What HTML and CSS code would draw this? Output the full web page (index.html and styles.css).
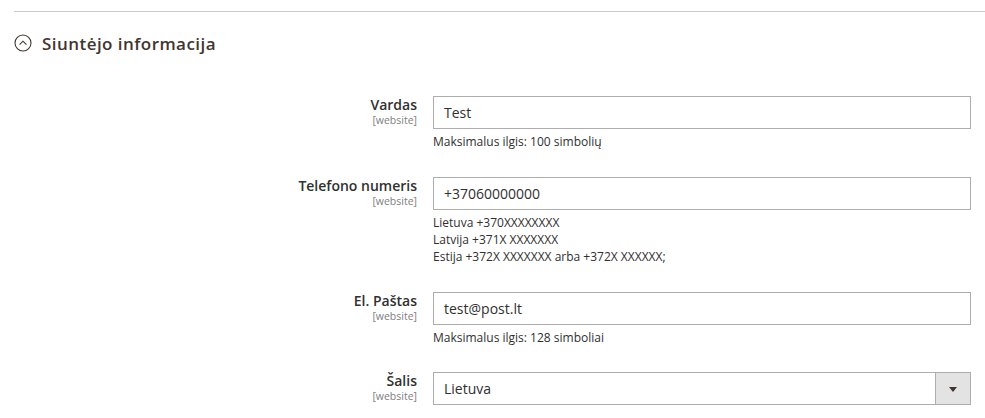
FILE: index.html
```html
<!DOCTYPE html>
<html lang="lt">
<head>
<meta charset="utf-8">
<link rel="stylesheet" href="styles.css">
</head>
<body>
<div class="section">
  <div class="section-head">
    <svg class="toggle" width="18" height="18" viewBox="0 0 18 18" aria-hidden="true">
      <circle cx="9" cy="9" r="8" fill="none" stroke="#41362f" stroke-width="1.1"/>
      <path d="M5.6 10.6 L9 7.2 L12.4 10.6" fill="none" stroke="#41362f" stroke-width="1.1"/>
    </svg>
    <span class="section-title">Siuntėjo informacija</span>
  </div>
  <div class="fields">
    <div class="row">
      <div class="label"><span class="name">Vardas</span><span class="scope">[website]</span></div>
      <div class="control">
        <div class="input">Test</div>
        <div class="note">Maksimalus ilgis: 100 simbolių</div>
      </div>
    </div>
    <div class="row">
      <div class="label"><span class="name">Telefono numeris</span><span class="scope">[website]</span></div>
      <div class="control">
        <div class="input">+37060000000</div>
        <div class="note">Lietuva +370XXXXXXXX<br>Latvija +371X XXXXXXX<br>Estija +372X XXXXXXX arba +372X XXXXXX;</div>
      </div>
    </div>
    <div class="row">
      <div class="label"><span class="name">El. Paštas</span><span class="scope">[website]</span></div>
      <div class="control">
        <div class="input">test@post.lt</div>
        <div class="note">Maksimalus ilgis: 128 simboliai</div>
      </div>
    </div>
    <div class="row row-last">
      <div class="label"><span class="name">Šalis</span><span class="scope">[website]</span></div>
      <div class="control">
        <div class="select"><span class="select-value">Lietuva</span><span class="select-btn"><span class="arrow"></span></span></div>
      </div>
    </div>
  </div>
</div>
</body>
</html>
```

FILE: styles.css
```css
html, body {
  margin: 0;
  padding: 0;
  background: #ffffff;
}
body {
  font-family: "Open Sans", "Noto Sans", sans-serif;
  color: #303030;
  overflow: hidden;
}
.section {
  margin-left: 14px;
  padding-top: 11px;
}
.section-head {
  border-top: 1px solid #cccccc;
  display: flex;
  align-items: center;
  padding-top: 20px;
  height: 22px;
}
.toggle {
  flex: none;
  margin-left: 0;
  margin-right: 10px;
}
.section-title {
  font-size: 17px;
  font-weight: 600;
  color: #41362f;
  letter-spacing: 0.45px;
}
.fields {
  padding-top: 42px;
}
.row {
  display: flex;
  align-items: flex-start;
  gap: 16px;
  margin-bottom: 27px;
}
.row-last {
  margin-top: -1px;
}
.label {
  width: 403px;
  display: flex;
  flex-direction: column;
  align-items: flex-end;
  text-align: right;
}
.name {
  font-size: 14px;
  font-weight: 600;
  line-height: 18px;
  color: #303030;
}
.scope {
  font-size: 10.5px;
  line-height: 13px;
  color: #808080;
}
.control {
  width: 538px;
}
.input, .select {
  box-sizing: border-box;
  height: 33px;
  border: 1px solid #adadad;
  font-size: 14px;
  line-height: 31px;
  padding-left: 10px;
  color: #303030;
}
.note {
  margin-top: 4px;
  font-size: 12px;
  line-height: 17px;
  color: #303030;
}
.select {
  display: flex;
  padding-left: 0;
}
.select-value {
  flex: 1;
  padding-left: 10px;
}
.select-btn {
  width: 34px;
  background: #e3e3e3;
  border-left: 1px solid #adadad;
  display: flex;
  align-items: center;
  justify-content: center;
}
.arrow {
  width: 0;
  height: 0;
  border-left: 4px solid transparent;
  border-right: 4px solid transparent;
  border-top: 5px solid #41362f;
  margin-top: 1px;
}
```
